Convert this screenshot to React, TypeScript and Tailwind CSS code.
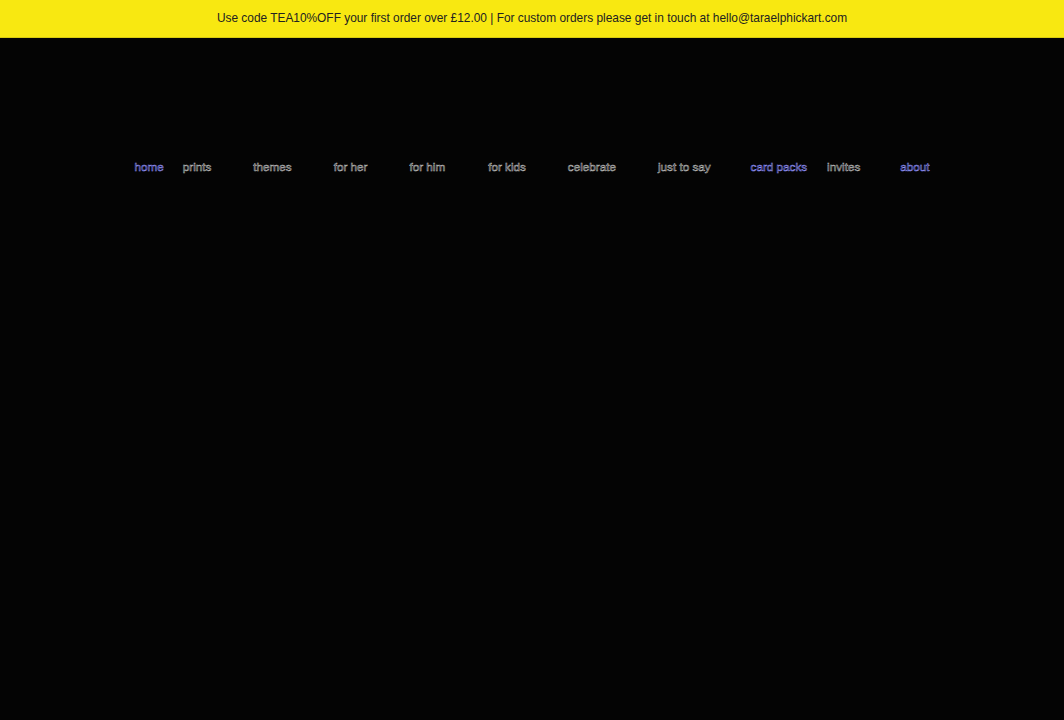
const navItems = [
  { label: 'home', active: true, ml: 'ml-0' },
  { label: 'prints', active: false, ml: 'ml-[19px]' },
  { label: 'themes', active: false, ml: 'ml-[42px]' },
  { label: 'for her', active: false, ml: 'ml-[42px]' },
  { label: 'for him', active: false, ml: 'ml-[42px]' },
  { label: 'for kids', active: false, ml: 'ml-[43px]' },
  { label: 'celebrate', active: false, ml: 'ml-[42px]' },
  { label: 'just to say', active: false, ml: 'ml-[42px]' },
  { label: 'card packs', active: true, ml: 'ml-[40px]' },
  { label: 'invites', active: false, ml: 'ml-[20px]' },
  { label: 'about', active: true, ml: 'ml-[40px]' },
];

export default function App() {
  return (
    <div className="w-full min-h-[720px] bg-[#040404] font-['Liberation_Sans',Arial,sans-serif]">
      <div className="h-[38px] bg-[#f8e811] flex items-center justify-center border-b border-[#d9cc10]">
        <p className="text-[11.9px] text-[#222] pt-px">
          Use code TEA10%OFF your first order over £12.00 | For custom orders please get in touch at hello@taraelphickart.com
        </p>
      </div>

      <nav className="pt-[119px] flex justify-center">
        <ul className="flex items-center">
          {navItems.map((item) => (
            <li
              key={item.label}
              className={
                item.ml +
                ' text-[11.7px] leading-5 text-transparent ' +
                (item.active
                  ? '[-webkit-text-stroke:0.5px_#9494ff]'
                  : '[-webkit-text-stroke:0.5px_#c0c0c0]')
              }
            >
              {item.label}
            </li>
          ))}
        </ul>
      </nav>
    </div>
  );
}
